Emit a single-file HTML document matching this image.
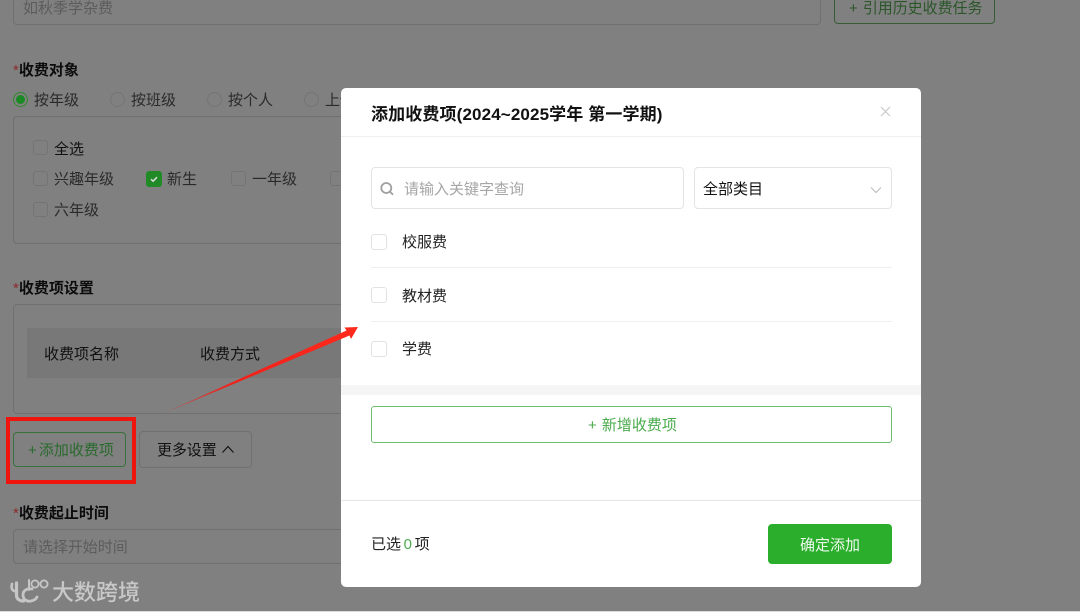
<!DOCTYPE html>
<html lang="zh-CN"><head><meta charset="utf-8"><title>添加收费项</title>
<style>
html,body{margin:0;padding:0}
body{width:1080px;height:612px;overflow:hidden;position:relative;background:#808080;font-family:"Liberation Sans","Noto Sans CJK SC",sans-serif;font-size:15px;color:#222}
div,svg{position:absolute;box-sizing:border-box}
#w{left:0;top:0;width:1080px;height:612px;overflow:hidden;filter:blur(.35px)}
.t{white-space:nowrap;line-height:20px;height:20px}
.b{font-weight:700;color:#0c0c0c}
.s{color:#8c2a2a;font-weight:400}
.g{color:#2a2a2a}
.p{color:#5c5c5c}
.box{border:1px solid #707070;border-radius:4px}
.cb{width:15px;height:15px;border:1px solid #747474;border-radius:3px}
.rd{width:15px;height:15px;border:1px solid #747474;border-radius:50%}
.m{color:#111}
.cw{width:16px;height:16px;border:1px solid #e2e2e2;border-radius:3px;background:#fff}
.ln{height:1px;background:#efefef}
</style></head><body><div id="w">
<!-- background form -->
<div class="box" style="left:13px;top:-20px;width:808px;height:45px"></div>
<div class="t p" style="left:23px;top:-1px">如秋季学杂费</div>
<div class="box" style="left:834px;top:-20px;width:161px;height:44px;border-color:#355c35"></div>
<div class="t" style="left:849px;top:-1px;color:#2a562a;word-spacing:1px;letter-spacing:-.05px">+ 引用历史收费任务</div>

<div class="t b" style="left:13px;top:61px"><span class="s">*</span>收费对象</div>
<div class="rd" style="left:13px;top:92px;border-color:#2f8a2f"></div>
<div style="left:16px;top:95px;width:9px;height:9px;border-radius:50%;background:#1c8a24"></div>
<div class="t g" style="left:34px;top:91px">按年级</div>
<div class="rd" style="left:110px;top:92px"></div><div class="t g" style="left:131px;top:91px">按班级</div>
<div class="rd" style="left:207px;top:92px"></div><div class="t g" style="left:228px;top:91px">按个人</div>
<div class="rd" style="left:304px;top:92px"></div><div class="t g" style="left:325px;top:91px">上传</div>
<div class="box" style="left:13px;top:116px;width:400px;height:128px"></div>
<div class="cb" style="left:33px;top:140px"></div><div class="t m" style="left:54px;top:140px">全选</div>
<div class="cb" style="left:33px;top:171px"></div><div class="t g" style="left:54px;top:170px">兴趣年级</div>
<div style="left:146px;top:171px;width:16px;height:16px;border-radius:3px;background:#1f8a26"></div>
<svg style="left:146px;top:171px" width="16" height="16" viewBox="0 0 16 16"><path d="M5 8.200l2.100 2 3.900-4" fill="none" stroke="#ddd" stroke-width="1.500"/></svg>
<div class="t g" style="left:167px;top:170px">新生</div>
<div class="cb" style="left:231px;top:171px"></div><div class="t g" style="left:252px;top:170px">一年级</div>
<div class="cb" style="left:330px;top:171px"></div>
<div class="cb" style="left:33px;top:202px"></div><div class="t g" style="left:54px;top:201px">六年级</div>

<div class="t b" style="left:13px;top:279px"><span class="s">*</span>收费项设置</div>
<div class="box" style="left:13px;top:304px;width:400px;height:110px"></div>
<div style="left:27px;top:328px;width:330px;height:50px;background:#787878"></div>
<div class="t m" style="left:44px;top:345px">收费项名称</div>
<div class="t m" style="left:200px;top:345px">收费方式</div>
<div class="box" style="left:13px;top:432px;width:113px;height:35px;border-color:#3a703a"></div>
<div class="t" style="left:28px;top:441px;color:#2a6a2e;word-spacing:-2px">+ 添加收费项</div>
<div class="box" style="left:139px;top:431px;width:113px;height:37px"></div>
<div class="t m" style="left:157px;top:441px;letter-spacing:-.1px">更多设置</div>
<svg style="left:220px;top:443px" width="16" height="12" viewBox="0 0 16 12"><path d="M2.500 9.500L8 3.500l5.500 6" fill="none" stroke="#111" stroke-width="1.100"/></svg>
<div style="left:6px;top:417px;width:130px;height:67px;border:4px solid #f0140f"></div>
<div class="t b" style="left:13px;top:504px"><span class="s">*</span>收费起止时间</div>
<div class="box" style="left:13px;top:529px;width:400px;height:35px"></div>
<div class="t p" style="left:23px;top:538px;letter-spacing:-.05px">请选择开始时间</div>

<!-- watermark -->
<svg style="left:8px;top:575px" width="44" height="32" viewBox="0 0 44 32"><g fill="none" stroke="#c6c6c6" stroke-linecap="round"><path d="M4 9c-1 4 0 6 2 7" stroke-width="2.600"/><path d="M8.500 8v12c0 4 3 6 7 6" stroke-width="3.200"/><path d="M24 14c-5-1-9 1.500-9 6s4 7 8 6 5-2 6-4" stroke-width="2.800"/><path d="M21 5v10" stroke-width="2"/><circle cx="27" cy="9" r="3.600" stroke-width="1.800"/><circle cx="36" cy="9" r="3.600" stroke-width="1.800"/></g></svg>
<div class="t" style="left:52px;top:580px;height:26px;line-height:26px;font-size:22px;font-weight:500;color:#c8c8c8">大数跨境</div>
<div style="left:0;top:611px;width:1080px;height:1px;background:#dedede"></div>

<!-- modal -->
<div style="left:341px;top:88px;width:580px;height:499px;background:#fff;border-radius:5px"></div>
<div class="t" style="left:371px;top:104px;font-size:17px;font-weight:700;color:#111;height:22px;line-height:22px;letter-spacing:.13px">添加收费项(2024~2025学年 第一学期)</div>
<svg style="left:879px;top:105px" width="13" height="13" viewBox="0 0 13 13"><path d="M2 2l9 9M11 2l-9 9" stroke="#c8c8c8" stroke-width="1.200"/></svg>
<div class="ln" style="left:341px;top:136px;width:580px"></div>

<div class="box" style="left:371px;top:167px;width:313px;height:42px;border-color:#e4e4e4"></div>
<svg style="left:379px;top:181px" width="16" height="16" viewBox="0 0 16 16"><circle cx="7.300" cy="7" r="5" fill="none" stroke="#a0a0a0" stroke-width="1.800"/><path d="M11 10.800l3 3" stroke="#a0a0a0" stroke-width="1.800"/></svg>
<div class="t" style="left:404px;top:180px;color:#a6a6a6">请输入关键字查询</div>
<div class="box" style="left:694px;top:167px;width:198px;height:42px;border-color:#e4e4e4"></div>
<div class="t" style="left:703px;top:180px;color:#111">全部类目</div>
<svg style="left:869px;top:185px" width="14" height="10" viewBox="0 0 14 10"><path d="M2 2.500l5 5 5-5" fill="none" stroke="#bcbcbc" stroke-width="1.100"/></svg>

<div class="cw" style="left:371px;top:234px"></div><div class="t" style="left:402px;top:233px;color:#222">校服费</div>
<div class="ln" style="left:371px;top:267px;width:521px"></div>
<div class="cw" style="left:371px;top:287px"></div><div class="t" style="left:402px;top:287px;color:#222">教材费</div>
<div class="ln" style="left:371px;top:321px;width:521px"></div>
<div class="cw" style="left:371px;top:341px"></div><div class="t" style="left:402px;top:340px;color:#222">学费</div>
<div style="left:341px;top:385px;width:580px;height:10px;background:#f5f5f5"></div>
<div style="left:371px;top:406px;width:521px;height:37px;border:1px solid #6fbf70;border-radius:3px"></div>
<div class="t" style="left:588px;top:416px;color:#4aab4c;word-spacing:1px">+ 新增收费项</div>
<div class="ln" style="left:341px;top:500px;width:580px;background:#e6e6e6"></div>
<div class="t" style="left:371px;top:535px;color:#222;word-spacing:-1.500px">已选 <span style="color:#4cae50">0</span> 项</div>
<div style="left:768px;top:524px;width:124px;height:40px;background:#2bae2c;border-radius:4px"></div>
<div class="t" style="left:800px;top:536px;color:#eef9ee">确定添加</div>

<!-- arrow above the modal -->
<svg style="left:150px;top:320px" width="215" height="100" viewBox="0 0 215 100">
<defs><linearGradient id="ar" gradientUnits="userSpaceOnUse" x1="12" y1="94" x2="208" y2="7"><stop offset="0" stop-color="#f0201a" stop-opacity=".25"/><stop offset=".35" stop-color="#f0201a"/><stop offset="1" stop-color="#ff2a1c"/></linearGradient></defs>
<path d="M12 94L196.500 10.500 194.500 7.500 208 7 201 19 199.500 15.500Z" fill="url(#ar)"/></svg>
</div></body></html>
